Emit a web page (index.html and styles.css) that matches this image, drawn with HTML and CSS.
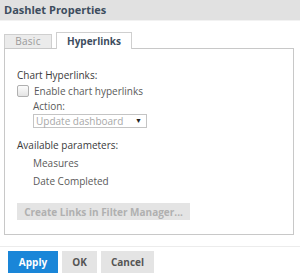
FILE: index.html
```html
<!DOCTYPE html>
<html lang="en">
<head>
  <meta charset="UTF-8" />
  <title>Dashlet Properties</title>
  <link rel="stylesheet" href="styles.css">
</head>
<body>

  <!-- Title -->
  <div class="title">Dashlet Properties</div>

  <div class="content">
    <!-- Tabs -->
    <div class="tabs">
      <div class="tab">Basic</div>
      <div class="tab active">Hyperlinks</div>
    </div>

    <!-- Panel -->
    <div class="panel">
      <div class="label">Chart Hyperlinks:</div>
      <label class="check">
        <span class="box"></span>
        Enable chart hyperlinks
      </label>
      <div class="indent">
        <div class="sub">Action:</div>
        <div class="select">
          <span>Update dashboard</span>
          <span class="arrow">&#9660;</span>
        </div>
      </div>

      <div class="label params">Available parameters:</div>
      <div class="indent">
        <div class="param">Measures</div>
        <div class="param">Date Completed</div>
      </div>

      <button class="links" disabled>Create Links in Filter Manager...</button>
    </div>
  </div>

  <!-- Footer -->
  <div class="footer">
    <button class="btn primary">Apply</button>
    <button class="btn ok">OK</button>
    <button class="btn cancel">Cancel</button>
  </div>

</body>
</html>
```

FILE: styles.css
```css
body {
  margin: 0;
  font-family: "Open Sans", sans-serif;
  font-size: 10px;
  color: #444;
  background: #fff;
}

/* Title */
.title {
  height: 20px;
  line-height: 20px;
  padding-left: 4px;
  background: #e1e1e1;
  color: #3d4d5e;
  font-weight: bold;
  font-size: 11px;
  border-bottom: 1px solid #f2f2f2;
}

.content {
  padding: 11px 6px 0 4px;
}

/* Tabs */
.tabs {
  display: flex;
  align-items: flex-end;
  gap: 4px;
}

.tab {
  width: 46px;
  height: 13px;
  line-height: 13px;
  text-align: center;
  background: #ebebeb;
  border: 1px solid #cfcfcf;
  border-bottom: none;
  color: #9a9a9a;
  letter-spacing: 0.3px;
}

.tab.active {
  width: 74px;
  height: 16px;
  line-height: 16px;
  background: #fff;
  color: #3d4d5e;
  font-weight: bold;
  letter-spacing: 0;
  margin-bottom: -1px;
  position: relative;
}

/* Panel */
.panel {
  border: 1px solid #c8c8c8;
  padding: 19px 13px 14px 12px;
}

.label {
  line-height: 14px;
  color: #3a3a3a;
}

.check {
  display: flex;
  align-items: center;
  gap: 5px;
  margin-top: 2px;
  line-height: 14px;
  color: #5a5a5a;
}

.box {
  width: 10px;
  height: 10px;
  border: 1px solid #b0b0b0;
  border-radius: 2px;
  background: linear-gradient(#fcfcfc, #e4e4e4);
}

.indent {
  padding-left: 16px;
}

.sub {
  margin-top: 1px;
  line-height: 14px;
  color: #5a5a5a;
}

.select {
  width: 110px;
  height: 12px;
  margin-top: 1px;
  border: 1px solid #c4c4c4;
  display: flex;
  justify-content: space-between;
  align-items: center;
  padding: 0 0 0 2px;
  color: #a8a8a8;
  line-height: 12px;
}

.arrow {
  font-size: 7px;
  color: #222;
  padding-right: 4px;
}

.params {
  margin-top: 10px;
}

.param {
  margin-top: 4px;
  line-height: 14px;
  color: #5a5a5a;
}

.links {
  display: block;
  margin-top: 15px;
  width: 173px;
  height: 17px;
  border: none;
  background: #e4e4e4;
  color: #b0b0b0;
  font-family: "Open Sans", sans-serif;
  font-size: 10px;
  font-weight: bold;
  padding: 0;
}

/* Footer */
.footer {
  margin-top: 11px;
  border-top: 1px solid #ececec;
  padding: 4px 8px 0;
  display: flex;
  gap: 4px;
}

.btn {
  height: 22px;
  padding: 0;
  border: none;
  background: #e4e4e4;
  color: #555;
  font-family: "Open Sans", sans-serif;
  font-size: 10px;
  font-weight: bold;
}

.btn.primary {
  width: 50px;
  background: #1a86d8;
  color: #fff;
}

.btn.ok {
  width: 35px;
}

.btn.cancel {
  width: 53px;
}
```
